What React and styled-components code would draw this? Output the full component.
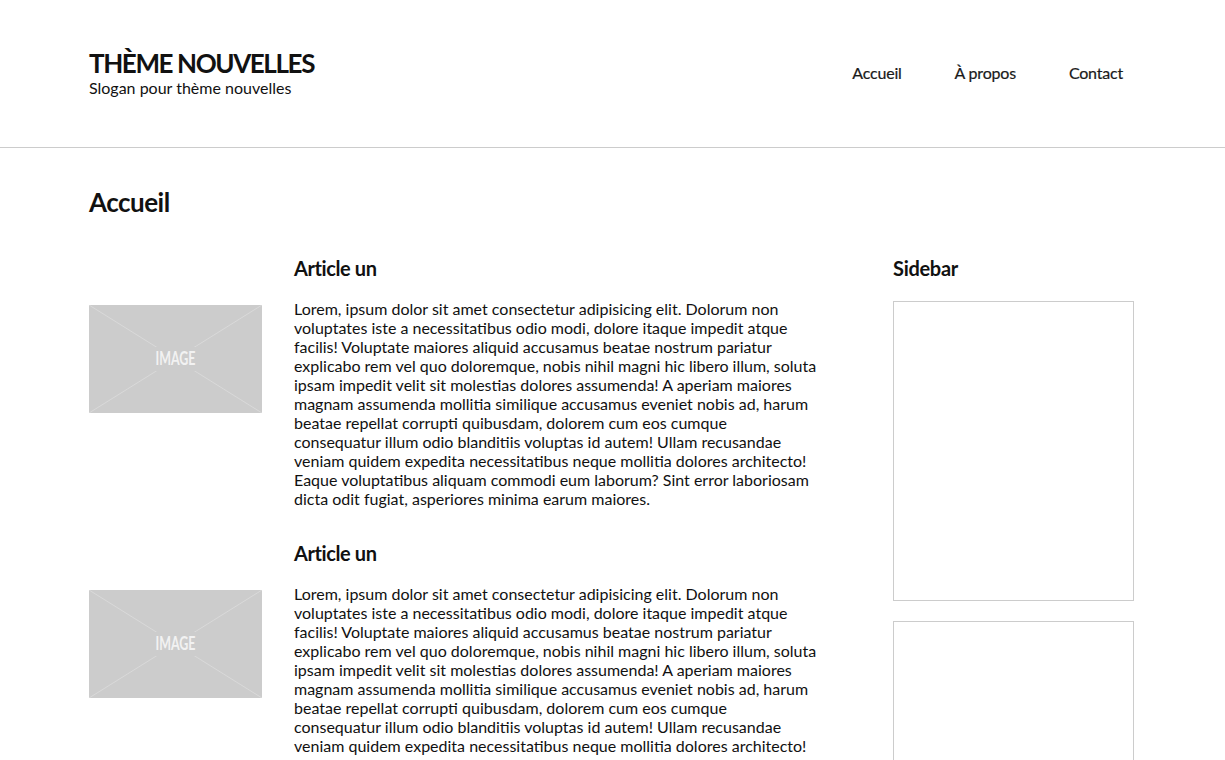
import React from 'react'
import styled, { createGlobalStyle } from 'styled-components'

const lorem = "Lorem, ipsum dolor sit amet consectetur adipisicing elit. Dolorum non voluptates iste a necessitatibus odio modi, dolore itaque impedit atque facilis! Voluptate maiores aliquid accusamus beatae nostrum pariatur explicabo rem vel quo doloremque, nobis nihil magni hic libero illum, soluta ipsam impedit velit sit molestias dolores assumenda! A aperiam maiores magnam assumenda mollitia similique accusamus eveniet nobis ad, harum beatae repellat corrupti quibusdam, dolorem cum eos cumque consequatur illum odio blanditiis voluptas id autem! Ullam recusandae veniam quidem expedita necessitatibus neque mollitia dolores architecto! Eaque voluptatibus aliquam commodi eum laborum? Sint error laboriosam dicta odit fugiat, asperiores minima earum maiores."

const articles = [
    { id: 1, title: "Article un", body: lorem },
    { id: 2, title: "Article un", body: lorem },
]

const GlobalStyle = createGlobalStyle`
    * { box-sizing: border-box; }
    body {
        margin: 0;
        background: #fff;
        color: #111;
        font-family: Lato, "Open Sans", sans-serif;
    }
`

const ImagePlaceholder = () => (
    <Thumb viewBox="0 0 173 108" width="173" height="108">
        <rect width="173" height="108" fill="#cccccc" />
        <line x1="0" y1="0" x2="173" y2="108" stroke="#d9d9d9" strokeWidth="1" />
        <line x1="173" y1="0" x2="0" y2="108" stroke="#d9d9d9" strokeWidth="1" />
        <rect x="62" y="42" width="50" height="24" fill="#cccccc" />
        <text
            x="86.5" y="59.5" textAnchor="middle" fill="#f2f2f2"
            fontFamily="Lato, sans-serif" fontSize="19" fontWeight="700"
            textLength="40" lengthAdjust="spacingAndGlyphs"
        >IMAGE</text>
    </Thumb>
)

const App = () => {
    return (
        <>
            <GlobalStyle />
            <Header>
                <Inner>
                    <Brand>
                        <SiteTitle>THÈME NOUVELLES</SiteTitle>
                        <Slogan>Slogan pour thème nouvelles</Slogan>
                    </Brand>
                    <Nav>
                        <NavLink href="#">Accueil</NavLink>
                        <NavLink href="#">À propos</NavLink>
                        <NavLink href="#">Contact</NavLink>
                    </Nav>
                </Inner>
            </Header>
            <Main>
                <PageTitle>Accueil</PageTitle>
                <Columns>
                    <Posts>
                        {articles.map((article) => {
                            return (
                                <Article key={article.id}>
                                    <ArticleTitle>{article.title}</ArticleTitle>
                                    <ImagePlaceholder />
                                    <ArticleText>{article.body}</ArticleText>
                                </Article>
                            )
                        })}
                    </Posts>
                    <Sidebar>
                        <SidebarTitle>Sidebar</SidebarTitle>
                        <Widget />
                        <Widget />
                    </Sidebar>
                </Columns>
            </Main>
        </>
    )
}

const Header = styled.header`
    height: 148px;
    border-bottom: 1px solid #cccccc;
    display: flex;
    align-items: center;
`

const Inner = styled.div`
    width: 100%;
    padding: 0 102px 0 89px;
    display: flex;
    align-items: center;
    justify-content: space-between;
`

const Brand = styled.div`
    display: flex;
    flex-direction: column;
    padding-bottom: 2px;
`

const SiteTitle = styled.h1`
    margin: 0;
    font-size: 26px;
    line-height: 30px;
    font-weight: 700;
    letter-spacing: -1.4px;
    color: #111;
`

const Slogan = styled.p`
    margin: 0;
    font-size: 16px;
    line-height: 20px;
    color: #111;
`

const Nav = styled.nav`
    display: flex;
    gap: 53px;
    padding-bottom: 2px;
`

const NavLink = styled.a`
    font-size: 16px;
    color: #1a1a1a;
    text-decoration: none;
    letter-spacing: -0.2px;
    -webkit-text-stroke: 0.2px #1a1a1a;
`

const Main = styled.main`
    padding: 39px 91px 0 89px;
`

const PageTitle = styled.h2`
    margin: 0 0 39px;
    font-size: 26px;
    line-height: 30px;
    font-weight: 700;
    letter-spacing: -0.5px;
`

const Columns = styled.div`
    display: flex;
    justify-content: space-between;
    align-items: flex-start;
`

const Posts = styled.div`
    display: flex;
    flex-direction: column;
    gap: 33px;
`

const Article = styled.article`
    display: grid;
    grid-template-columns: 173px 523px;
    column-gap: 32px;
    row-gap: 19px;
    align-items: start;
`

const ArticleTitle = styled.h3`
    grid-column: 2;
    margin: 0;
    font-size: 20px;
    line-height: 24px;
    font-weight: 700;
    letter-spacing: -0.4px;
`

const Thumb = styled.svg`
    display: block;
    grid-column: 1;
    margin-top: 6px;
`

const ArticleText = styled.p`
    margin: 0;
    grid-column: 2;
    font-size: 16px;
    line-height: 19px;
`

const Sidebar = styled.aside`
    width: 241px;
    display: flex;
    flex-direction: column;
    gap: 20px;
`

const SidebarTitle = styled.h3`
    margin: 0 0 1px;
    font-size: 20px;
    line-height: 24px;
    font-weight: 700;
    letter-spacing: -0.3px;
`

const Widget = styled.div`
    height: 300px;
    border: 1px solid #cccccc;
`

export default App
